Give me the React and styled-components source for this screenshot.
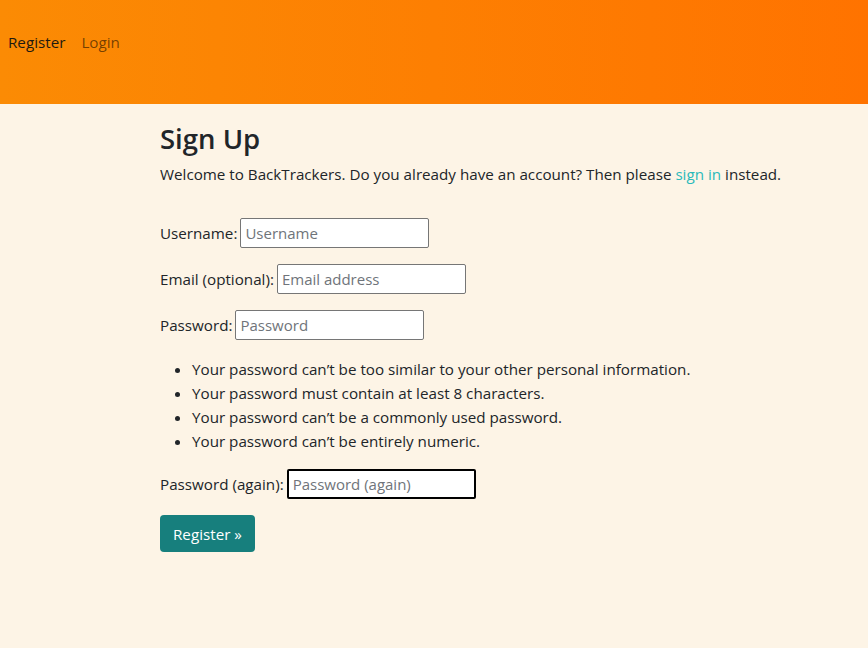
import React from "react";
import styled, { createGlobalStyle } from "styled-components";

const Global = createGlobalStyle`
  html, body {
    margin: 0;
    padding: 0;
    background-color: #fdf4e6;
    font-family: "Open Sans", "Noto Sans", sans-serif;
    font-size: 15.2px;
    color: #212529;
  }
  * {
    box-sizing: border-box;
  }
`;

const Head = styled.header`
  height: 104px;
  background: linear-gradient(to right, #fb8b04, #ff7300);
  display: flex;
  align-items: center;
  padding: 0 8px 20px;
`;

const NavLink = styled.a`
  font-size: 15.2px;
  text-decoration: none;
  padding-right: 16px;
  color: ${({ $active }) => ($active ? "#1f1a10" : "rgba(0, 0, 0, 0.55)")};
`;

const Main = styled.main`
  padding: 18px 0 0 160px;
`;

const Title = styled.h1`
  margin: 0 0 7px;
  font-size: 27.5px;
  font-weight: 600;
  line-height: 1.2;
`;

const Lead = styled.p`
  margin: 0 0 32px;
  line-height: 24px;
`;

const Link = styled.a`
  color: #2bbaba;
  text-decoration: none;
`;

const Form = styled.form`
  display: flex;
  flex-direction: column;
  align-items: flex-start;
`;

const Field = styled.p`
  margin: 0 0 16px;
  display: flex;
  align-items: center;
  gap: 3px;
`;

const Input = styled.input`
  width: 189px;
  height: 30px;
  padding: 1px 4px;
  font-family: inherit;
  font-size: 15px;
  border: ${({ $focus }) => ($focus ? "2px solid #000" : "1px solid #767676")};
  border-radius: 2px;
  background: #fff;
  outline: none;
  &::placeholder {
    color: #6f747a;
  }
`;

const Help = styled.ul`
  margin: 1px 0 16px;
  padding-left: 32px;
  line-height: 24px;
`;

const Submit = styled.button`
  background-color: #177f7d;
  color: #fff;
  border: none;
  border-radius: 4px;
  padding: 0 13px;
  height: 37px;
  font-family: inherit;
  font-size: 15.2px;
`;

const hints = [
  "Your password can\u2019t be too similar to your other personal information.",
  "Your password must contain at least 8 characters.",
  "Your password can\u2019t be a commonly used password.",
  "Your password can\u2019t be entirely numeric.",
];

const App = () => {
  return (
    <>
      <Global />
      <Head>
        <NavLink href="#" $active>
          Register
        </NavLink>
        <NavLink href="#">Login</NavLink>
      </Head>
      <Main>
        <Title>Sign Up</Title>
        <Lead>
          Welcome to BackTrackers. Do you already have an account? Then please{" "}
          <Link href="#">sign in</Link> instead.
        </Lead>
        <Form>
          <Field>
            Username: <Input placeholder="Username" />
          </Field>
          <Field>
            Email (optional): <Input placeholder="Email address" />
          </Field>
          <Field>
            Password: <Input type="password" placeholder="Password" />
          </Field>
          <Help>
            {hints.map((h) => (
              <li key={h}>{h}</li>
            ))}
          </Help>
          <Field>
            Password (again):{" "}
            <Input type="password" placeholder="Password (again)" $focus />
          </Field>
          <Submit type="submit">Register &raquo;</Submit>
        </Form>
      </Main>
    </>
  );
};

export default App;
